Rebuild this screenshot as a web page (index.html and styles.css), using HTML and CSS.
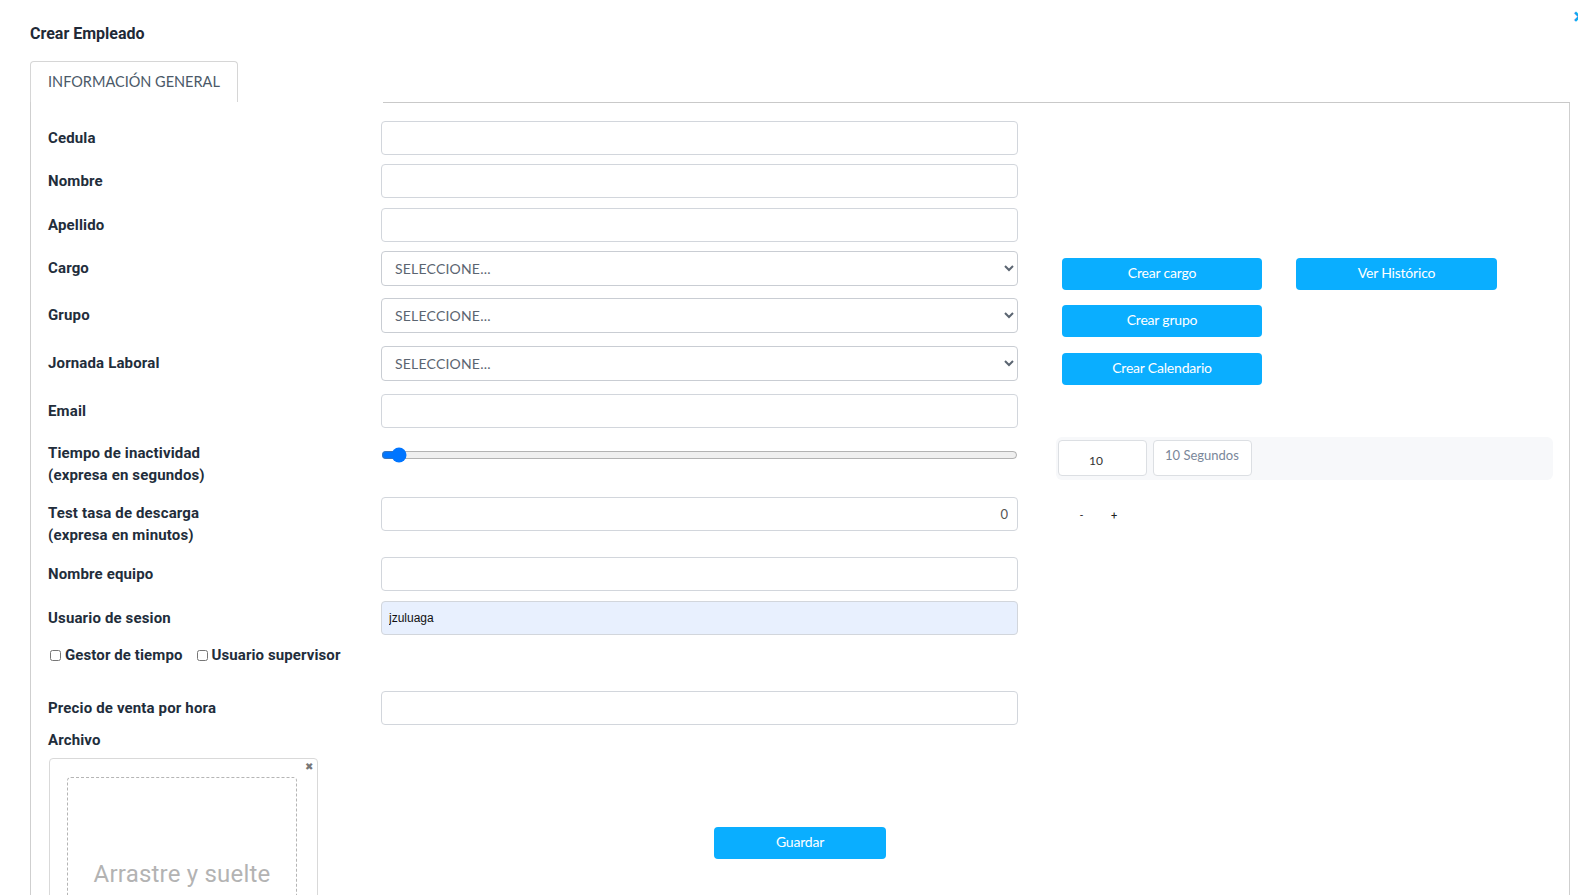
FILE: index.html
```html
<!DOCTYPE html>
<html lang="es">
<head>
<meta charset="utf-8">
<title>Crear Empleado</title>
<link rel="stylesheet" href="styles.css">
</head>
<body>
<div class="page">
  <span class="close-x">×</span>
  <h1 class="title">Crear Empleado</h1>
  <div class="tabs">
    <div class="tab">INFORMACIÓN GENERAL</div>
    <div class="tab-gap"></div>
    <div class="tab-line"></div>
  </div>
  <div class="panel">
    <div class="row r43"><label class="lbl">Cedula</label><input class="field" type="text"><div></div></div>
    <div class="row r44"><label class="lbl">Nombre</label><input class="field" type="text"><div></div></div>
    <div class="row r43"><label class="lbl">Apellido</label><input class="field" type="text"><div></div></div>
    <div class="row r47">
      <label class="lbl">Cargo</label>
      <select class="field sel"><option>SELECCIONE...</option></select>
      <div class="extra btns"><button class="btn">Crear cargo</button><button class="btn">Ver Histórico</button></div>
    </div>
    <div class="row r48">
      <label class="lbl">Grupo</label>
      <select class="field sel"><option>SELECCIONE...</option></select>
      <div class="extra btns"><button class="btn">Crear grupo</button></div>
    </div>
    <div class="row r48">
      <label class="lbl">Jornada Laboral</label>
      <select class="field sel"><option>SELECCIONE...</option></select>
      <div class="extra btns"><button class="btn">Crear Calendario</button></div>
    </div>
    <div class="row r43"><label class="lbl">Email</label><input class="field" type="text"><div></div></div>
    <div class="row r60 top">
      <label class="lbl two l5">Tiempo de inactividad<br>(expresa en segundos)</label>
      <div class="slider-wrap"><input class="slider" type="range" min="0" max="600" value="10"></div>
      <div class="extra">
        <div class="gray-box">
          <input class="small-in" type="text" value="10">
          <div class="unit">10 Segundos</div>
        </div>
      </div>
    </div>
    <div class="row r60 top">
      <label class="lbl two l5">Test tasa de descarga<br>(expresa en minutos)</label>
      <input class="field num" type="text" value="0">
      <div class="extra pm"><span class="minus">-</span><span class="plus">+</span></div>
    </div>
    <div class="row r44"><label class="lbl">Nombre equipo</label><input class="field" type="text"><div></div></div>
    <div class="row r40"><label class="lbl">Usuario de sesion</label><input class="field filled" type="text" value="jzuluaga"><div></div></div>
    <div class="checks">
      <label class="chk"><input type="checkbox">Gestor de tiempo</label>
      <label class="chk"><input type="checkbox">Usuario supervisor</label>
    </div>
    <div class="row r38"><label class="lbl">Precio de venta por hora</label><input class="field" type="text"><div></div></div>
    <div class="lbl archivo">Archivo</div>
    <div class="bottom">
      <div class="dropzone">
        <span class="dz-x">✖</span>
        <div class="dz-inner"><span class="dz-text">Arrastre y suelte</span></div>
      </div>
      <button class="btn save">Guardar</button>
    </div>
  </div>
</div>
</body>
</html>
```
FILE: styles.css
```css
html, body {
  margin: 0;
  padding: 0;
  background: #fff;
  overflow: hidden;
}
body {
  font-family: Roboto, "Liberation Sans", sans-serif;
  color: #222d3b;
}
.page {
  position: relative;
  padding: 24px 8px 0 30px;
  height: 871px;
}
.close-x {
  position: absolute;
  right: -7px;
  top: 6px;
  color: #10a8f0;
  font-size: 22px;
  font-weight: bold;
  line-height: 1;
}
.title {
  margin: 0;
  font-size: 16px;
  line-height: 20px;
  font-weight: 700;
  color: #1f2a37;
}
.tabs {
  display: flex;
  margin-top: 17px;
  height: 41px;
}
.tab {
  width: 189px;
  height: 40px;
  padding-left: 17px;
  border: 1px solid #d6d6d6;
  border-bottom: none;
  border-radius: 4px 4px 0 0;
  font-family: Lato, "Open Sans", sans-serif;
  font-size: 14.5px;
  color: #4b5968;
  line-height: 40px;
  box-sizing: content-box;
  background: #fff;
}
.tab-gap {
  width: 145px;
}
.tab-line {
  flex: 1;
  border-bottom: 1px solid #c9c9c9;
  margin-bottom: -1px;
}
.panel {
  border-left: 1px solid #cfcfcf;
  border-right: 1px solid #cfcfcf;
  padding: 19px 0 0 17px;
  height: 800px;
}
.row {
  display: grid;
  grid-template-columns: 333px 637px 535px;
  align-items: center;
}
.row.top { align-items: start; }
.r38 { height: 38px; }
.r40 { height: 40px; }
.r43 { height: 43px; }
.r44 { height: 44px; }
.r47 { height: 47px; }
.r48 { height: 48px; }
.r60 { height: 60px; }
.row > * { align-self: start; }
.row .lbl { align-self: start; margin-top: 6px; }
.row .lbl.l5 { margin-top: 5px; }
.lbl {
  display: block;
  font-size: 15px;
  font-weight: 700;
  line-height: 22px;
  letter-spacing: 0.15px;
  color: #222d3b;
}
.field {
  box-sizing: border-box;
  width: 637px;
  height: 34px;
  border: 1px solid #d2d6dc;
  border-radius: 4px;
  background: #fff;
  margin: 0;
  padding: 0 12px;
  font-family: Lato, sans-serif;
  font-size: 14px;
  color: #333;
}
.sel {
  height: 35px;
  color: #5b6571;
  font-size: 14px;
  letter-spacing: 0.2px;
  padding-left: 9px;
  border-color: #c9cdd3;
}
.num {
  text-align: right;
  padding-right: 9px;
  font-size: 13px;
  color: #555;
}
.filled {
  background: #e8f0fe;
  font-family: "Liberation Sans", Arial, sans-serif;
  font-size: 12px;
  color: #111;
  padding-left: 7px;
}
.extra {
  padding-left: 38px;
}
.btns {
  display: flex;
  gap: 34px;
  padding-left: 44px;
  padding-top: 7px;
}
.btn {
  width: 200px;
  height: 32px;
  border: none;
  border-radius: 4px;
  background: #0aaeff;
  color: #fff;
  font-family: Lato, "Open Sans", sans-serif;
  font-size: 14px;
  line-height: 30px;
  letter-spacing: -0.2px;
  padding: 0 0 2px;
  cursor: pointer;
}
.btns .btn + .btn { width: 201px; }
.slider-wrap {
  padding-top: 10px;
}
.slider {
  width: 637px;
  margin: 0;
  height: 16px;
  accent-color: #0075ff;
  display: block;
}
.gray-box {
  display: flex;
  gap: 6px;
  width: 497px;
  height: 43px;
  padding: 3px 0 0 2px;
  box-sizing: border-box;
  background: #f7f8fa;
  border-radius: 6px;
}
.small-in {
  box-sizing: border-box;
  width: 89px;
  height: 36px;
  border: 1px solid #dcdfe3;
  border-radius: 4px;
  background: #fff;
  margin: 0;
  padding: 4px 0 0 30px;
  font-family: Lato, sans-serif;
  font-size: 12px;
  color: #333;
}
.unit {
  box-sizing: border-box;
  width: 99px;
  height: 36px;
  border: 1px solid #dcdfe3;
  border-radius: 4px;
  background: #fff;
  padding: 6px 0 0 11px;
  font-family: Lato, sans-serif;
  font-size: 13px;
  color: #7a879a;
}
.pm {
  display: flex;
  padding-left: 62px;
  padding-top: 12px;
  font-size: 11px;
  color: #222;
  gap: 28px;
}
.checks {
  display: flex;
  gap: 12px;
  height: 50px;
  align-items: flex-start;
  padding-top: 3px;
  box-sizing: border-box;
}
.chk {
  display: flex;
  align-items: center;
  font-size: 15px;
  font-weight: 700;
  line-height: 22px;
  letter-spacing: 0.1px;
  color: #222d3b;
}
.chk input {
  margin: 0 4px 0 2px;
  width: 11px;
  height: 11px;
}
.archivo {
  margin-top: 0;
  height: 29px;
  line-height: 22px;
}
.bottom {
  display: flex;
  align-items: flex-start;
}
.dropzone {
  position: relative;
  box-sizing: border-box;
  width: 269px;
  height: 200px;
  margin-left: 1px;
  border: 1px solid #d9d9d9;
  border-radius: 4px;
  padding: 18px 0 0 17px;
}
.dz-x {
  position: absolute;
  right: 4px;
  top: 2px;
  font-size: 10px;
  color: #777;
}
.dz-inner {
  box-sizing: border-box;
  width: 230px;
  height: 180px;
  border: 1px dashed #b5b5b5;
  border-radius: 4px;
  text-align: center;
  padding-top: 82px;
}
.dz-text {
  font-family: Roboto, sans-serif;
  font-size: 24px;
  color: #b3b3b3;
  letter-spacing: 0.2px;
}
.save {
  width: 172px;
  margin-left: 396px;
  margin-top: 69px;
}
```
